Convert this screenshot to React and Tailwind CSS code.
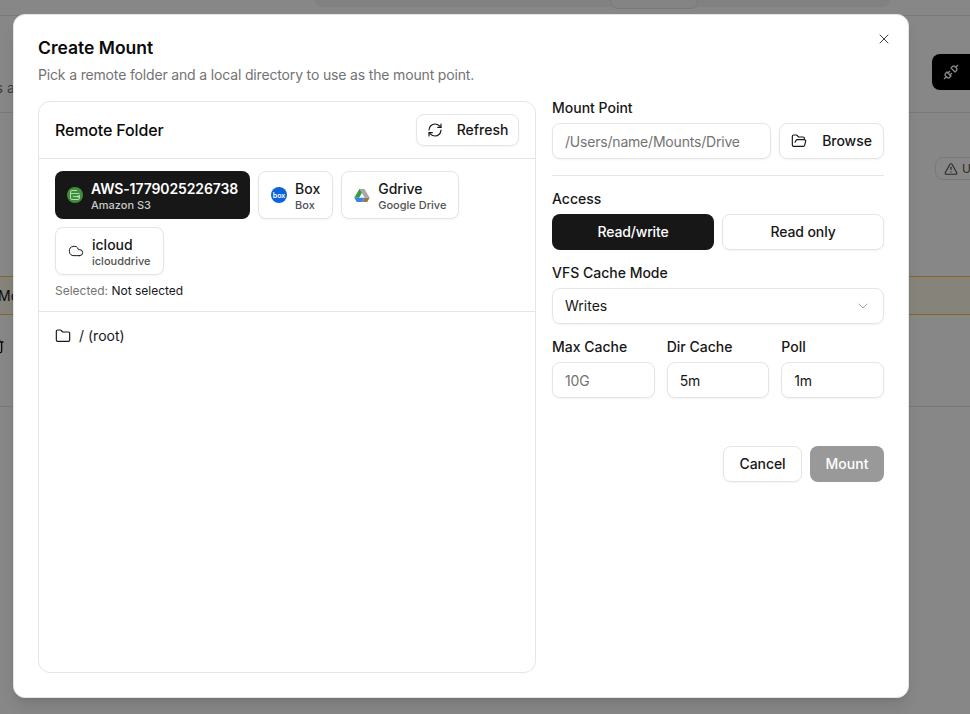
import { ChevronDown, Cloud, Folder, FolderOpen, RefreshCw, Trash2, TriangleAlert, Unplug, X } from 'lucide-react';

const S3Icon = () => (
  <svg width="16" height="16" viewBox="0 0 16 16" className="shrink-0">
    <circle cx="8" cy="8" r="8" fill="#3f8f3a" />
    <path d="M10 3.5H5A1.5 1.5 0 0 0 3.5 5v6A1.5 1.5 0 0 0 5 12.5h6a1.5 1.5 0 0 0 1.5-1.5V8" fill="none" stroke="#b9dcb6" strokeWidth="1" />
    <path d="M3.5 6.5h9M6 9.5h6M10.5 8l1.5 1.5-1.5 1.5" fill="none" stroke="#b9dcb6" strokeWidth="0.9" />
  </svg>
);

const BoxIcon = () => (
  <div className="w-4 h-4 rounded-full bg-[#0b63d8] flex items-center justify-center shrink-0">
    <span className="text-white text-[7px] font-semibold leading-none">box</span>
  </div>
);

const DriveIcon = () => (
  <svg width="16" height="15" viewBox="0 0 17 15" className="shrink-0">
    <path d="M5.7 0.5h5.4L8.4 5.2 5.6 10H0.3z" fill="#2f9e44" />
    <path d="M11.1 0.5l5.6 9.5h-5.3L8.4 5.2 5.7 0.5z" fill="#a8a8a8" />
    <path d="M8.4 5.2l-2.6 4.6h5.3z" fill="#ffffff" />
    <path d="M0.3 10h10.9l-2.6 4.5H3z" fill="#3b82e6" />
    <path d="M11.2 10h5.5L14 14.5H8.6z" fill="#947a4a" />
  </svg>
);

const remotes = [
  { name: 'AWS-1779025226738', type: 'Amazon S3', icon: <S3Icon />, active: true },
  { name: 'Box', type: 'Box', icon: <BoxIcon /> },
  { name: 'Gdrive', type: 'Google Drive', icon: <DriveIcon /> },
  { name: 'icloud', type: 'iclouddrive', icon: <Cloud size={16} strokeWidth={1.5} className="shrink-0" /> },
];

const Background = () => (
  <div className="h-[714px] overflow-hidden bg-white text-sm text-[#171717]">
    <div className="h-4 border-b border-[#e5e5e5]">
      <div className="ml-[315px] w-[575px] h-[7px] bg-[#f4f4f4] rounded-b-lg">
        <div className="ml-[295px] w-[88px] h-[9px] bg-[#fafafa] rounded-b-lg border border-[#e5e5e5] border-t-0" />
      </div>
    </div>
    <div className="h-[97px] border-b border-[#e5e5e5] flex justify-between pt-[38px] overflow-hidden">
      <span className="mt-6 -ml-[29px] text-[#737373]">tools a</span>
      <div className="w-[60px] h-9 bg-black rounded-l-lg flex items-center pl-[11px] -mr-[22px] shrink-0">
        <Unplug size={16} className="text-white" />
      </div>
    </div>
    <div className="h-[163px] flex justify-end pt-[44px] overflow-hidden">
      <div className="h-[23px] w-[60px] pl-2 border border-[#e5e5e5] rounded-l-lg flex items-center gap-1 text-xs text-[#525252] -mr-[25px] shrink-0">
        <TriangleAlert size={14} />
        <span>Un</span>
      </div>
    </div>
    <div className="h-[39px] bg-[#fef9e7] border-y border-[#f5c542] flex items-center">
      <span className="-ml-[2px]">Mount</span>
    </div>
    <div className="h-[92px] border-b border-[#e5e5e5] flex items-start pt-[23px]">
      <Trash2 size={16} className="-ml-[11px]" />
    </div>
  </div>
);

const FieldLabel = ({ children }) => (
  <label className="block text-sm font-medium leading-[20px] text-[#171717]">{children}</label>
);

const TextBox = ({ placeholder, value, className = '' }) => (
  <input
    readOnly
    placeholder={placeholder}
    value={value}
    className={`h-9 min-w-0 border border-[#e5e5e5] rounded-lg px-3 text-sm tracking-[-0.2px] text-[#171717] placeholder:text-[#737373] shadow-xs outline-none bg-white ${className}`}
  />
);

const App = () => {
  return (
    <div className="relative h-[714px] overflow-hidden font-['Inter',sans-serif]">
      <Background />
      <div className="absolute inset-0 bg-black/[.47] pl-[13px] pt-[14px]">
        <div className="relative w-[896px] h-[684px] bg-white rounded-xl border border-[#e5e5e5] shadow-lg px-6 pt-6 pb-6 flex flex-col">
          <button className="absolute right-[16px] top-[16px] text-[#404040]">
            <X size={16} strokeWidth={1.5} />
          </button>

          <h2 className="text-[17.5px] leading-[18px] font-semibold text-[#0a0a0a]">Create Mount</h2>
          <p className="mt-[8px] text-sm leading-5 tracking-[-0.16px] text-[#737373]">Pick a remote folder and a local directory to use as the mount point.</p>

          <div className="mt-[16px] flex-1 flex gap-4 min-h-0">
            <div className="w-[498px] border border-[#e5e5e5] rounded-xl flex flex-col">
              <div className="h-[57px] shrink-0 border-b border-[#e5e5e5] pl-4 pr-4 flex items-center justify-between">
                <span className="text-base font-medium tracking-[-0.15px] text-[#0a0a0a]">Remote Folder</span>
                <button className="h-8 w-[103px] border border-[#e5e5e5] rounded-lg shadow-xs flex items-center justify-center gap-[14px] text-sm font-medium text-[#171717]">
                  <RefreshCw size={16} strokeWidth={1.75} />
                  Refresh
                </button>
              </div>

              <div className="h-[153px] shrink-0 border-b border-[#e5e5e5] pl-4 pr-4 pt-3">
                <div className="flex flex-wrap gap-2">
                  {remotes.map(remote => (
                    <button
                      key={remote.name}
                      className={`h-12 rounded-lg px-3 flex items-center gap-2 text-left ${remote.active ? 'bg-[#171717] text-white' : 'bg-white border border-[#e5e5e5] shadow-xs text-[#171717]'}`}
                    >
                      {remote.icon}
                      <span className="flex flex-col pt-[2px]">
                        <span className={`text-sm leading-[18px] ${remote.active ? 'font-semibold tracking-[-0.12px]' : 'font-medium'}`}>{remote.name}</span>
                        <span className={`text-[11px] leading-[14px] font-medium ${remote.active ? 'text-[#c9c9c9]' : 'text-[#525252]'}`}>{remote.type}</span>
                      </span>
                    </button>
                  ))}
                </div>
                <p className="mt-2 text-xs leading-4">
                  <span className="text-[#737373]">Selected: </span>
                  <span className="text-[#171717]">Not selected</span>
                </p>
              </div>

              <div className="pl-4 pt-[14px] flex items-center gap-2 text-sm text-[#171717]">
                <Folder size={16} strokeWidth={1.75} />
                <span>/ (root)</span>
              </div>
            </div>

            <div className="w-[332px] -mt-[3px] flex flex-col">
              <FieldLabel>Mount Point</FieldLabel>
              <div className="mt-[5px] flex gap-2">
                <TextBox placeholder="/Users/name/Mounts/Drive" className="w-[219px]" />
                <button className="h-9 w-[105px] border border-[#e5e5e5] rounded-lg shadow-xs flex items-center justify-center gap-[15px] text-sm font-medium tracking-[-0.05px] text-[#171717]">
                  <FolderOpen size={16} strokeWidth={1.75} />
                  Browse
                </button>
              </div>
              <div className="mt-4 border-t border-[#e5e5e5]" />

              <div className="mt-[13px]"><FieldLabel>Access</FieldLabel></div>
              <div className="mt-[5px] grid grid-cols-2 gap-2">
                <button className="h-9 rounded-lg bg-[#171717] text-white text-sm font-medium tracking-[-0.15px]">Read/write</button>
                <button className="h-9 rounded-lg border border-[#e5e5e5] shadow-xs text-sm font-medium tracking-[-0.1px] text-[#171717]">Read only</button>
              </div>

              <div className="mt-[13px]"><FieldLabel>VFS Cache Mode</FieldLabel></div>
              <div className="mt-[5px] h-9 border border-[#e5e5e5] rounded-lg shadow-xs px-3 flex items-center justify-between text-sm text-[#171717]">
                <span>Writes</span>
                <ChevronDown size={16} strokeWidth={1.5} className="text-[#a3a3a3]" />
              </div>

              <div className="mt-[13px] grid grid-cols-3 gap-3">
                <div>
                  <FieldLabel>Max Cache</FieldLabel>
                  <TextBox placeholder="10G" className="mt-[5px] w-full" />
                </div>
                <div>
                  <FieldLabel>Dir Cache</FieldLabel>
                  <TextBox value="5m" className="mt-[5px] w-full" />
                </div>
                <div>
                  <FieldLabel>Poll</FieldLabel>
                  <TextBox value="1m" className="mt-[5px] w-full" />
                </div>
              </div>

              <div className="mt-12 flex justify-end gap-2">
                <button className="h-9 w-[79px] border border-[#e5e5e5] rounded-lg shadow-xs text-sm font-medium tracking-[-0.1px] text-[#171717]">Cancel</button>
                <button className="h-9 w-[74px] rounded-lg bg-[#999999] text-white text-sm font-medium">Mount</button>
              </div>
            </div>
          </div>
        </div>
      </div>
    </div>
  );
};

export default App;
